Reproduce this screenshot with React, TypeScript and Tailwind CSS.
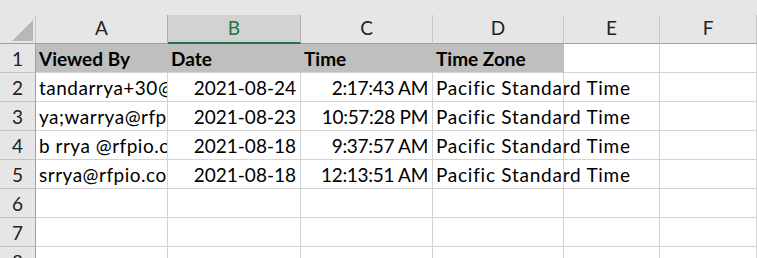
const cols = ["A", "B", "C", "D", "E", "F"];

const rows = [
  { viewer: "tandarrya+30@rfpio.com", date: "2021-08-24", time: "2:17:43 AM", zone: "Pacific Standard Time" },
  { viewer: "ya;warrya@rfpio.com", date: "2021-08-23", time: "10:57:28 PM", zone: "Pacific Standard Time" },
  { viewer: "b rrya @rfpio.com", date: "2021-08-18", time: "9:37:57 AM", zone: "Pacific Standard Time" },
  { viewer: "srrya@rfpio.com", date: "2021-08-18", time: "12:13:51 AM", zone: "Pacific Standard Time" },
];

const cell = "h-[29px] border-r border-b border-[#d4d4d4] overflow-hidden whitespace-nowrap flex items-end pb-[4px]";

function RowHead({ n }: { n: number }) {
  return (
    <div className="h-[29px] border-r border-r-[#a0a0a0] border-b border-b-[#c4c4c4] bg-[#e6e6e6] flex items-end justify-center pb-[4px] text-[#222]">
      {n}
    </div>
  );
}

export default function App() {
  return (
    <div
      className="w-[757px] h-[258px] overflow-hidden bg-white text-[19px] leading-[19px] text-black"
      style={{ fontFamily: "Lato, 'Liberation Sans', sans-serif" }}
    >
      <div className="h-[15px] bg-[#e6e6e6]" />
      <div className="grid grid-cols-[36px_132px_133px_132px_131px_96px_97px]">
        {/* column headers */}
        <div className="relative h-[29px] bg-[#e6e6e6] border-r border-r-[#c6c6c6] border-b border-b-[#a0a0a0]">
          <svg className="absolute left-[12px] top-[5px]" width="21" height="21" viewBox="0 0 21 21">
            <polygon points="21,0 21,21 0,21" fill="#b8b8b8" />
          </svg>
        </div>
        {cols.map((c) => (
          <div
            key={c}
            className={
              c === "B"
                ? "h-[29px] bg-[#d2d2d2] border-r border-r-[#ababab] border-b-2 border-b-[#217346] flex items-end justify-center pb-[5px] text-[#217346]"
                : c === "A"
                  ? "h-[29px] bg-[#e6e6e6] border-r border-r-[#ababab] border-b border-b-[#a0a0a0] flex items-end justify-center pb-[6px] text-[#222]"
                  : "h-[29px] bg-[#e6e6e6] border-r border-r-[#c6c6c6] border-b border-b-[#a0a0a0] flex items-end justify-center pb-[6px] text-[#222]"
            }
          >
            {c}
          </div>
        ))}

        {/* row 1 */}
        <RowHead n={1} />
        {["Viewed By", "Date", "Time", "Time Zone"].map((h) => (
          <div
            key={h}
            className="h-[29px] bg-[#bfbfbf] border-r border-r-[#bfbfbf] border-b border-b-[#d4d4d4] flex items-end pb-[4px] pl-[3px] font-bold whitespace-nowrap overflow-hidden"
          >
            {h}
          </div>
        ))}
        <div className={cell} />
        <div className={cell} />

        {rows.map((r, i) => (
          <div key={i} className="contents">
            <RowHead n={i + 2} />
            <div className={`${cell} pl-[3px] tracking-[0.5px]`}>{r.viewer}</div>
            <div className={`${cell} justify-end pr-[4px]`}>{r.date}</div>
            <div className={`${cell} justify-end pr-[4px] tracking-[-0.3px]`}>{r.time}</div>
            <div className={`${cell} pl-[3px] overflow-visible tracking-[0.75px]`}>{r.zone}</div>
            <div className={cell} />
            <div className={cell} />
          </div>
        ))}

        {[6, 7, 8].map((n) => (
          <div key={n} className="contents">
            <RowHead n={n} />
            <div className={cell} />
            <div className={cell} />
            <div className={cell} />
            <div className={cell} />
            <div className={cell} />
            <div className={cell} />
          </div>
        ))}
      </div>
    </div>
  );
}
